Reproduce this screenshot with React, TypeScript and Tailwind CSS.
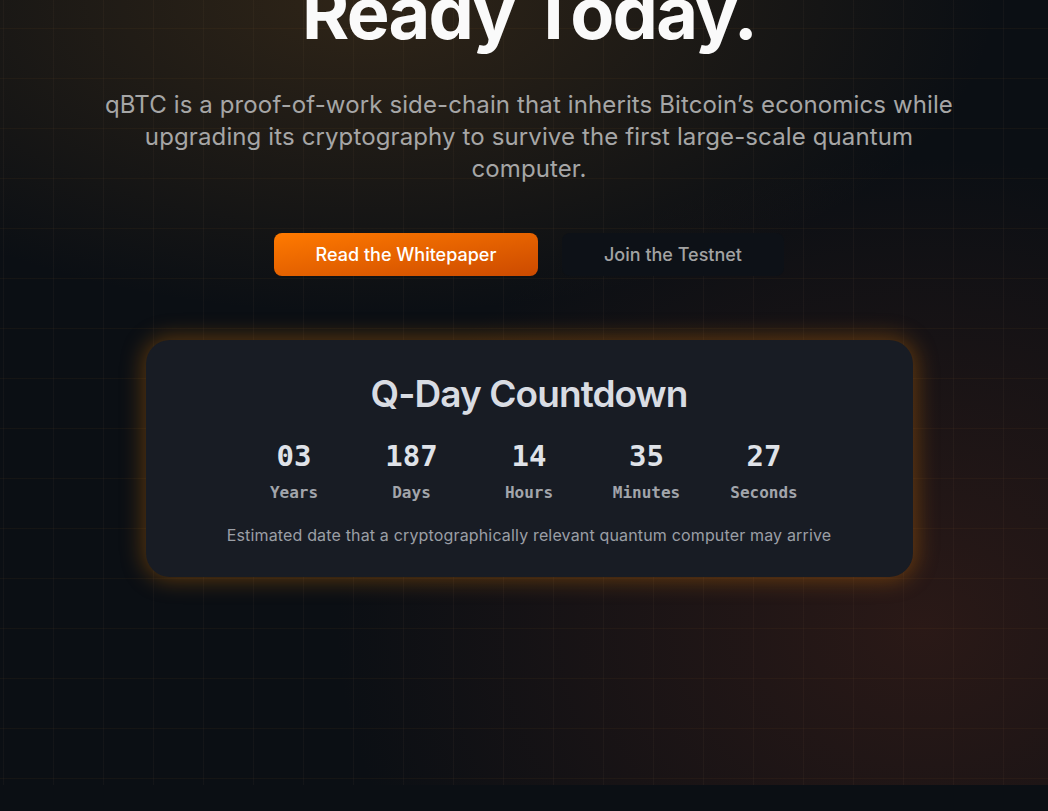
import React from "react";

const units = [
  { value: "03", label: "Years" },
  { value: "187", label: "Days" },
  { value: "14", label: "Hours" },
  { value: "35", label: "Minutes" },
  { value: "27", label: "Seconds" },
];

const sans = "font-['Inter','Noto_Sans',sans-serif]";
const mono = "font-['DejaVu_Sans_Mono','Liberation_Mono',monospace]";

const Countdown: React.FC = () => (
  <div className="w-full max-w-[767px] rounded-3xl bg-[#181c24] pt-[34px] pb-8 shadow-[0_0_22px_3px_rgba(217,119,6,0.38)]">
    <h2 className={`${sans} text-center text-[37px] leading-10 font-semibold tracking-tight text-[#d9dce3]`}>
      Q-Day Countdown
    </h2>
    <div className="mt-6 flex justify-center">
      {units.map((u) => (
        <div key={u.label} className="flex w-[117.5px] flex-col items-center">
          <span className={`${mono} text-[29px] leading-9 font-bold text-[#dfe2e8]`}>
            {u.value}
          </span>
          <span className={`${mono} mt-[7px] text-base leading-6 font-bold text-[#a2a5ab]`}>
            {u.label}
          </span>
        </div>
      ))}
    </div>
    <p className={`${sans} mt-5 text-center text-[16px] leading-5 tracking-[0.01em] text-[#9b9fa6]`}>
      Estimated date that a cryptographically relevant quantum computer may arrive
    </p>
  </div>
);

export default function App() {
  return (
    <div className="min-h-[811px] bg-[#0b0f14]">
      <section className="relative h-[785px] overflow-hidden bg-[#0b0f14] bg-[radial-gradient(ellipse_75%_50%_at_35%_0%,rgba(120,80,30,0.33),transparent_80%),radial-gradient(ellipse_70%_75%_at_88%_80%,rgba(105,45,28,0.33),transparent_80%)]">
        <div className="pointer-events-none absolute inset-0 bg-[linear-gradient(rgba(150,90,30,0.08)_1px,transparent_1px),linear-gradient(90deg,rgba(140,110,80,0.07)_1px,transparent_1px)] bg-[size:50px_50px] bg-[position:3px_28px]" />
        <div className="relative flex flex-col items-center pl-[10px]">
          <h1 className={`${sans} -mt-[23px] text-[72px] leading-[72px] font-bold tracking-tight text-[#fafafa]`}>
            Ready Today.
          </h1>
          <p className={`${sans} mt-[40px] text-center text-[24px] leading-8 tracking-[0.005em] text-[#a6a6a6]`}>
            qBTC is a proof-of-work side-chain that inherits Bitcoin’s economics while
            <br />
            upgrading its cryptography to survive the first large-scale quantum
            <br />
            computer.
          </p>
          <div className="mt-12 flex gap-6">
            <button className={`${sans} h-[43px] w-[264px] rounded-lg bg-gradient-to-br from-[#ff7a00] to-[#cc4a00] text-[18px] font-medium text-white`}>
              Read the Whitepaper
            </button>
            <button className={`${sans} h-[43px] w-[222px] rounded-lg bg-[#0d1117] text-[18px] font-medium text-[#a3a3a3]`}>
              Join the Testnet
            </button>
          </div>
          <div className="mt-16 flex w-full justify-center">
            <Countdown />
          </div>
        </div>
      </section>
    </div>
  );
}
